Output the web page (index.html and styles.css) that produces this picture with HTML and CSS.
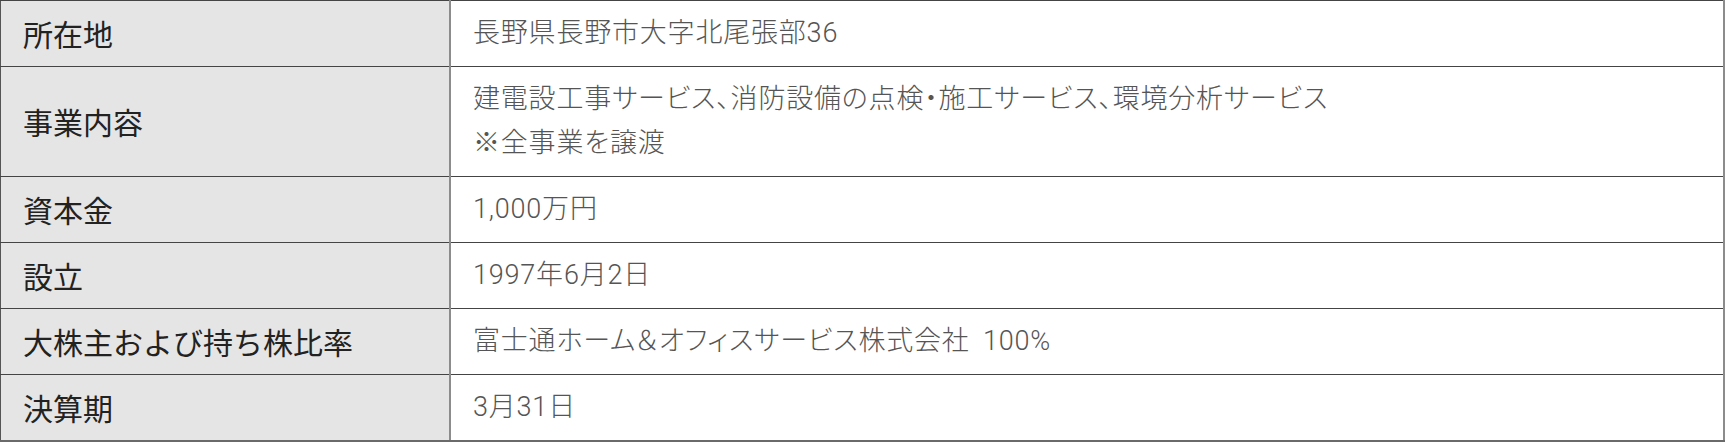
FILE: index.html
```html
<!DOCTYPE html>
<html lang="ja">
<head>
<meta charset="utf-8">
<title>会社概要</title>
<link rel="stylesheet" href="styles.css">
</head>
<body>
<table class="info">
  <tbody>
    <tr><th>所在地</th><td>長野県長野市大字北尾張部36</td></tr>
    <tr><th>事業内容</th><td>建電設工事サービス、消防設備の点検・施工サービス、環境分析サービス<br>※全事業を譲渡</td></tr>
    <tr><th>資本金</th><td>1,000万円</td></tr>
    <tr><th>設立</th><td>1997年6月2日</td></tr>
    <tr><th>大株主および持ち株比率</th><td>富士通ホーム＆オフィスサービス株式会社 100%</td></tr>
    <tr><th>決算期</th><td>3月31日</td></tr>
  </tbody>
</table>
</body>
</html>
```
FILE: styles.css
```css
html, body {
  margin: 0;
  padding: 0;
  background: #ffffff;
}
.info {
  width: 1725px;
  border-collapse: collapse;
}
.info th,
.info td {
  border-top: 1px solid #444444;
  border-bottom: 1px solid #444444;
  padding: 10px 22px 11px 22px;
  line-height: 44px;
  vertical-align: middle;
  text-align: left;
}
.info tr:last-child th,
.info tr:last-child td {
  border-bottom: 2px solid #6a6a6a;
}
.info th {
  width: 404px;
  background: #e5e5e5;
  color: #222222;
  font-family: "Noto Sans CJK JP", "Noto Sans", sans-serif;
  font-size: 30px;
  font-weight: 400;
  border-left: 1px solid #555555;
  border-right: 2px solid #8c8c8c;
}
.info td {
  color: #555555;
  font-family: Roboto, "Noto Sans CJK JP", sans-serif;
  font-feature-settings: "palt";
  font-size: 27px;
  font-weight: 300;
  letter-spacing: 0.8px;
  word-spacing: 6px;
  border-right: 2px solid #8c8c8c;
}
```
